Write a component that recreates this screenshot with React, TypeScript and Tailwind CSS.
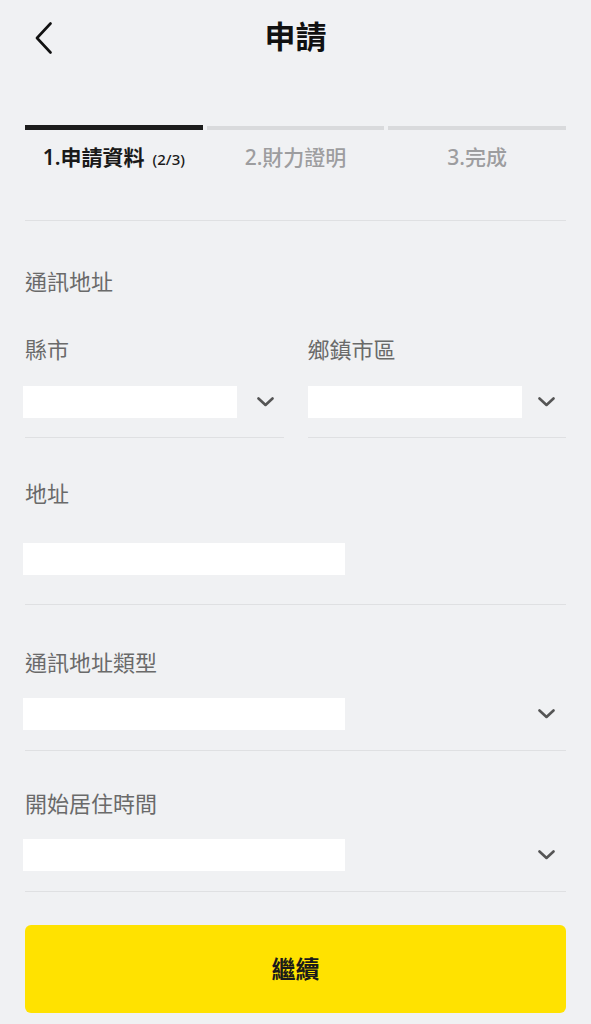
import React from "react";

function ChevronDown() {
  return (
    <svg width="17" height="10" viewBox="0 0 17 10" fill="none" className="shrink-0">
      <path d="M1.5 1.5 L8.5 8 L15.5 1.5" stroke="#555" strokeWidth="2.6" strokeLinecap="round" strokeLinejoin="round" />
    </svg>
  );
}

function BackChevron() {
  return (
    <svg width="19" height="32" viewBox="0 0 19 32" fill="none">
      <path d="M16.5 1.5 L3 16 L16.5 30.5" stroke="#111" strokeWidth="2.6" strokeLinecap="round" strokeLinejoin="round" />
    </svg>
  );
}

function Label({ children, className = "" }: { children: React.ReactNode; className?: string }) {
  return <div className={`text-[22px] leading-[28px] text-[#6a6a6a] ${className}`}>{children}</div>;
}

export default function App() {
  return (
    <div className="min-h-screen w-full bg-[#f0f1f3] font-['Noto_Sans','Noto_Sans_CJK_TC',sans-serif]">
      {/* Header */}
      <div className="grid h-[76px] grid-cols-[1fr_auto_1fr] items-center">
        <div className="pl-[34px]">
          <BackChevron />
        </div>
        <div className="-mt-[4px] text-[31px] font-bold leading-none text-[#111]">申請</div>
        <div />
      </div>

      <div className="px-[25px]">
        {/* Progress */}
        <div className="mt-[49px] flex h-[5px] items-center gap-[4px]">
          <div className="h-[5px] flex-1 bg-[#1c1c1c]" />
          <div className="h-[4px] flex-1 bg-[#d9dadc]" />
          <div className="h-[4px] flex-1 bg-[#d9dadc]" />
        </div>
        <div className="mt-[14px] flex gap-[4px] text-[21px] leading-[27px]">
          <div className="flex flex-1 items-baseline justify-center font-semibold text-[#1a1a1a]">
            <span>1.申請資料</span>
            <span className="ml-[8px] text-[15px] font-medium">(2/3)</span>
          </div>
          <div className="flex-1 text-center font-medium text-[#9d9d9f]">2.財力證明</div>
          <div className="flex-1 text-center font-medium text-[#9d9d9f]">3.完成</div>
        </div>
        <div className="mt-[47px] h-px bg-[#dfe0e2]" />

        {/* 通訊地址 */}
        <Label className="mt-[46px]">通訊地址</Label>

        <div className="mt-[40px] grid grid-cols-2 gap-x-[24px]">
          <div>
            <Label>縣市</Label>
            <div className="mt-[23px] flex items-center justify-between border-b border-[#dfe0e2] pb-[19px] pr-[10px]">
              <div className="-ml-[2px] h-[32px] w-[214px] bg-white" />
              <ChevronDown />
            </div>
          </div>
          <div>
            <Label>鄉鎮市區</Label>
            <div className="mt-[23px] flex items-center justify-between border-b border-[#dfe0e2] pb-[19px] pr-[11px]">
              <div className="h-[32px] w-[214px] bg-white" />
              <ChevronDown />
            </div>
          </div>
        </div>

        {/* 地址 */}
        <Label className="mt-[41px]">地址</Label>
        <div className="mt-[36px] border-b border-[#dfe0e2] pb-[29px]">
          <div className="-ml-[2px] h-[32px] w-[322px] bg-white" />
        </div>

        {/* 通訊地址類型 */}
        <Label className="mt-[43px]">通訊地址類型</Label>
        <div className="mt-[22px] flex items-center justify-between border-b border-[#dfe0e2] pb-[20px] pr-[11px]">
          <div className="-ml-[2px] h-[32px] w-[322px] bg-white" />
          <ChevronDown />
        </div>

        {/* 開始居住時間 */}
        <Label className="mt-[38px]">開始居住時間</Label>
        <div className="mt-[22px] flex items-center justify-between border-b border-[#dfe0e2] pb-[20px] pr-[11px]">
          <div className="-ml-[2px] h-[32px] w-[322px] bg-white" />
          <ChevronDown />
        </div>

        {/* Button */}
        <button className="mt-[33px] flex h-[88px] w-full items-center justify-center rounded-[6px] bg-[#ffe200] text-[24px] font-bold text-[#1a1a1a]">
          繼續
        </button>
      </div>
    </div>
  );
}
